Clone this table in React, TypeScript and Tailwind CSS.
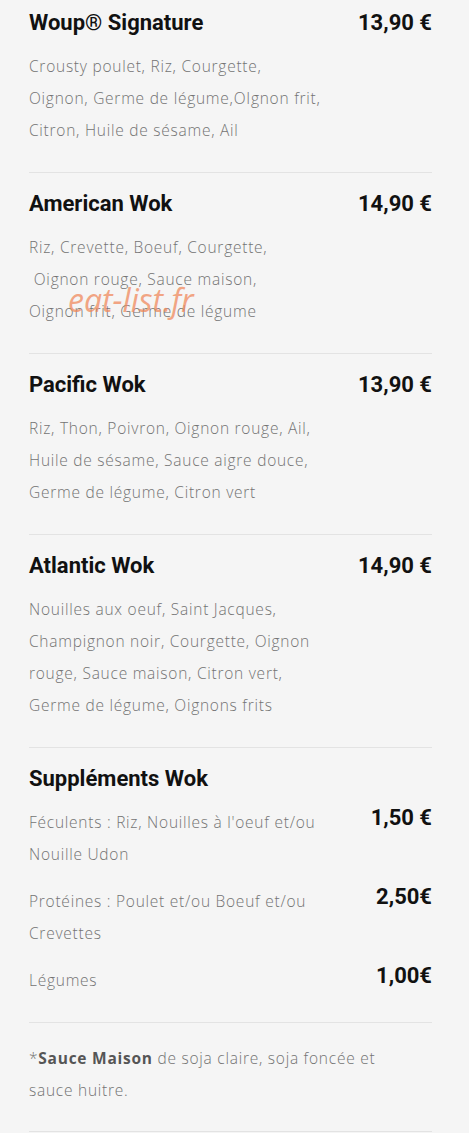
const items = [
  {
    name: 'Woup® Signature',
    price: '13,90 €',
    lines: ['Crousty poulet, Riz, Courgette,', 'Oignon, Germe de légume,OIgnon frit,', 'Citron, Huile de sésame, Ail'],
  },
  {
    name: 'American Wok',
    price: '14,90 €',
    lines: ['Riz, Crevette, Boeuf, Courgette,', '\u00a0Oignon rouge, Sauce maison,', 'Oignon frit, Germe de légume'],
  },
  {
    name: 'Pacific Wok',
    price: '13,90 €',
    lines: ['Riz, Thon, Poivron, Oignon rouge, Ail,', 'Huile de sésame, Sauce aigre douce,', 'Germe de légume, Citron vert'],
  },
  {
    name: 'Atlantic Wok',
    price: '14,90 €',
    lines: [
      'Nouilles aux oeuf, Saint Jacques,',
      'Champignon noir, Courgette, Oignon',
      'rouge, Sauce maison, Citron vert,',
      'Germe de légume, Oignons frits',
    ],
  },
];

const supplements = [
  { lines: ["Féculents : Riz, Nouilles à l'oeuf et/ou", 'Nouille Udon'], price: '1,50 €' },
  { lines: ['Protéines : Poulet et/ou Boeuf et/ou', 'Crevettes'], price: '2,50€' },
  { lines: ['Légumes'], price: '1,00€' },
];

const title = "font-['Roboto',sans-serif] text-[22px] font-bold leading-[30px] text-[#111]";
const body =
  "font-['Open_Sans',sans-serif] text-[15.5px] font-light leading-[32px] tracking-[0.75px] text-[#737373] whitespace-nowrap";

export default function App() {
  return (
    <div className="relative min-h-screen bg-[#f5f5f5] px-[29px] pt-2 pr-[37px]">
      {items.map((item, i) => (
        <section key={item.name} className={`border-b border-[#e3e3e3] pb-[26px] ${i === 0 ? '' : 'pt-4'}`}>
          <div className="flex items-start justify-between">
            <h3 className={title}>{item.name}</h3>
            <span className={title}>{item.price}</span>
          </div>
          <p className={`mt-3 ${body}`}>
            {item.lines.map((l) => (
              <span key={l} className="block whitespace-pre">
                {l}
              </span>
            ))}
          </p>
        </section>
      ))}

      <section className="border-b border-[#e3e3e3] pt-4 pb-[26px]">
        <h3 className={title}>Suppléments Wok</h3>
        <div className="mt-3 flex flex-col gap-[15px]">
          {supplements.map((s) => (
            <div key={s.price} className="flex items-start justify-between">
              <p className={body}>
                {s.lines.map((l) => (
                  <span key={l} className="block">
                    {l}
                  </span>
                ))}
              </p>
              <span className={`${title} -mt-[3px] leading-[24px]`}>{s.price}</span>
            </div>
          ))}
        </div>
      </section>

      <section className="border-b border-[#e3e3e3] pt-[19px] pb-[25px]">
        <p className={body}>
          *<b className="font-bold text-[#555]">Sauce Maison</b> de soja claire, soja foncée et
          <br />
          sauce huitre.
        </p>
      </section>

      {/* watermark */}
      <span className="pointer-events-none absolute left-[68px] top-[284px] font-['Open_Sans',sans-serif] text-[32px] italic leading-none text-[#f08a5d] opacity-75">
        eat-list.fr
      </span>
    </div>
  );
}
